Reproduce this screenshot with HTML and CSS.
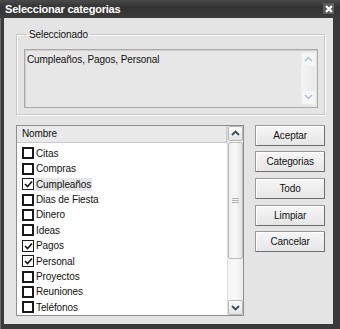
FILE: index.html
```html
<!DOCTYPE html>
<html lang="es">
<head>
    <meta charset="UTF-8">
    <meta name="viewport" content="width=device-width, initial-scale=1.0">
    <title>Seleccionar categorias</title>
    <link rel="stylesheet" href="styles.css">
</head>
<body>
    <div class="window">
        <div class="titlebar">
            <span class="title">Seleccionar categorias</span>
            <span class="close">
                <svg width="8" height="8" viewBox="0 0 8 8">
                    <path d="M1 1 L7 7 M7 1 L1 7" stroke="#fff" stroke-width="2.2"/>
                </svg>
            </span>
        </div>

        <div class="panel">
            <fieldset class="group">
                <legend>Seleccionado</legend>
                <div class="selected-box">
                    <div class="selected-text">Cumpleaños, Pagos, Personal</div>
                    <div class="mini-scroll">
                        <div class="mini-arrow">
                            <svg width="9" height="6" viewBox="0 0 9 6"><path d="M1 5 L4.5 1.5 L8 5" fill="none" stroke="#a8c0e0" stroke-width="1.5"/></svg>
                        </div>
                        <div class="mini-track"></div>
                        <div class="mini-arrow">
                            <svg width="9" height="6" viewBox="0 0 9 6"><path d="M1 1 L4.5 4.5 L8 1" fill="none" stroke="#a8c0e0" stroke-width="1.5"/></svg>
                        </div>
                    </div>
                </div>
            </fieldset>

            <div class="lower">
                <div class="list">
                    <div class="list-body">
                        <div class="list-header">Nombre</div>
                        <div class="rows">
                            <div class="row"><span class="check"></span><span class="name">Citas</span></div>
                            <div class="row"><span class="check"></span><span class="name">Compras</span></div>
                            <div class="row"><span class="check checked"><svg width="9" height="8" viewBox="0 0 9 8"><path d="M1 4 L3.5 6.5 L8 1.5" fill="none" stroke="#111" stroke-width="1.6"/></svg></span><span class="name active">Cumpleaños</span></div>
                            <div class="row"><span class="check"></span><span class="name">Dias de Fiesta</span></div>
                            <div class="row"><span class="check"></span><span class="name">Dinero</span></div>
                            <div class="row"><span class="check"></span><span class="name">Ideas</span></div>
                            <div class="row"><span class="check checked"><svg width="9" height="8" viewBox="0 0 9 8"><path d="M1 4 L3.5 6.5 L8 1.5" fill="none" stroke="#111" stroke-width="1.6"/></svg></span><span class="name">Pagos</span></div>
                            <div class="row"><span class="check checked"><svg width="9" height="8" viewBox="0 0 9 8"><path d="M1 4 L3.5 6.5 L8 1.5" fill="none" stroke="#111" stroke-width="1.6"/></svg></span><span class="name">Personal</span></div>
                            <div class="row"><span class="check"></span><span class="name">Proyectos</span></div>
                            <div class="row"><span class="check"></span><span class="name">Reuniones</span></div>
                            <div class="row"><span class="check"></span><span class="name">Teléfonos</span></div>
                        </div>
                    </div>
                    <div class="scrollbar">
                        <div class="scroll-btn">
                            <svg width="9" height="6" viewBox="0 0 9 6"><path d="M1 5 L4.5 1.5 L8 5" fill="none" stroke="#3c4a5c" stroke-width="1.8"/></svg>
                        </div>
                        <div class="thumb">
                            <div class="grip"></div>
                        </div>
                        <div class="track"></div>
                        <div class="scroll-btn">
                            <svg width="9" height="6" viewBox="0 0 9 6"><path d="M1 1 L4.5 4.5 L8 1" fill="none" stroke="#3c4a5c" stroke-width="1.8"/></svg>
                        </div>
                    </div>
                </div>

                <div class="buttons">
                    <button>Aceptar</button>
                    <button>Categorias</button>
                    <button>Todo</button>
                    <button>Limpiar</button>
                    <button>Cancelar</button>
                </div>
            </div>
        </div>
    </div>
</body>
</html>
```

FILE: styles.css
```css
body {
    margin: 0;
    font-family: "Liberation Sans", Arial, sans-serif;
    font-size: 10px;
    letter-spacing: -0.1px;
    color: #111;
}

.window {
    width: 340px;
    height: 329px;
    box-sizing: border-box;
    background: #3a3a3a;
    padding: 0 7px 5px 3px;
    display: flex;
    flex-direction: column;
    border-left: 1px solid #6a6a6a;
}

.titlebar {
    height: 21px;
    margin: 0 -7px 0 -4px;
    padding: 0 6px 0 5px;
    display: flex;
    align-items: center;
    justify-content: space-between;
    background: linear-gradient(#4a4a4a, #333 40%, #3c3c3c);
}

.title {
    color: #fff;
    font-weight: bold;
    font-size: 11px;
    letter-spacing: -0.2px;
}

.close {
    width: 11px;
    height: 11px;
    background: #5c5c5c;
    display: flex;
    align-items: center;
    justify-content: center;
}

.panel {
    flex: 1;
    background: #e4e4e4;
    padding: 10px 8px 8px 12px;
    display: flex;
    flex-direction: column;
}

.group {
    margin: 0;
    padding: 8px 6px 6px 7px;
    border: 1px solid #c8c8c8;
    box-shadow: inset 1px 1px 0 #fafafa, 1px 1px 0 #fafafa;
}

.group legend {
    padding: 0 2px;
    margin-left: 3px;
    line-height: 13px;
}

.selected-box {
    height: 59px;
    box-sizing: border-box;
    border: 1px solid #a9a9a9;
    background: #e7e7e7;
    display: flex;
    box-shadow: inset 1px 1px 0 #d0d0d0;
}

.selected-text {
    flex: 1;
    padding: 4px 2px;
}

.mini-scroll {
    width: 15px;
    margin: 2px 1px 2px 0;
    display: flex;
    flex-direction: column;
    background: linear-gradient(90deg, #f4f4f4, #eaeaea);
}

.mini-arrow {
    height: 13px;
    display: flex;
    align-items: center;
    justify-content: center;
    background: #f6f6f6;
    border: 1px solid #ececec;
}

.mini-track {
    flex: 1;
}

.lower {
    flex: 1;
    min-height: 0;
    margin-top: 10px;
    display: flex;
    gap: 11px;
}

.list {
    width: 229px;
    box-sizing: border-box;
    border: 1px solid #8e8e8e;
    background: #fff;
    display: flex;
    overflow: hidden;
}

.list-body {
    flex: 1;
    display: flex;
    flex-direction: column;
    overflow: hidden;
}

.list-header {
    height: 17px;
    flex-shrink: 0;
    box-sizing: border-box;
    padding: 2px 5px 1px;
    background: #e9e9e9;
    border-bottom: 1px solid #c9c9c9;
    border-right: 1px solid #c9c9c9;
}

.rows {
    padding-top: 3px;
}

.row {
    height: 15.4px;
    display: flex;
    align-items: center;
    padding-left: 5px;
}

.check {
    width: 12px;
    height: 12px;
    box-sizing: border-box;
    border: 2px solid #1a1a1a;
    background: #fff;
    display: flex;
    align-items: center;
    justify-content: center;
    flex-shrink: 0;
}

.check.checked {
    border-width: 1.5px;
}

.name {
    margin-left: 1px;
    padding: 1px 1px;
}

.name.active {
    background: #e6e6e6;
}

.scrollbar {
    width: 15px;
    display: flex;
    flex-direction: column;
    background: linear-gradient(90deg, #f4f4f4, #f8f8f8 50%, #ececec);
    border-left: 1px solid #dedede;
}

.scroll-btn {
    height: 15px;
    flex-shrink: 0;
    box-sizing: border-box;
    border: 1px solid #b8b8b8;
    border-radius: 2px;
    background: linear-gradient(#fafafa, #e4e4e4);
    display: flex;
    align-items: center;
    justify-content: center;
}

.thumb {
    height: 117px;
    flex-shrink: 0;
    box-sizing: border-box;
    margin-top: 1px;
    border: 1px solid #bcbcbc;
    border-radius: 2px;
    background: linear-gradient(90deg, #eeeeee, #f9f9f9 50%, #e2e2e2);
    display: flex;
    align-items: center;
    justify-content: center;
}

.grip {
    width: 7px;
    height: 5px;
    background: repeating-linear-gradient(#b4b4b4 0 1px, transparent 1px 2px);
}

.track {
    flex: 1;
}

.buttons {
    width: 70px;
    display: flex;
    flex-direction: column;
    gap: 5.7px;
}

button {
    height: 21px;
    font-family: inherit;
    font-size: 10px;
    letter-spacing: -0.1px;
    color: #111;
    background: linear-gradient(#f6f6f6, #e6e6e6);
    border: 1px solid #9a9a9a;
    border-right-color: #6e6e6e;
    border-bottom-color: #6e6e6e;
    border-radius: 1px;
    box-shadow: inset 1px 1px 0 #fff;
    padding: 0;
}
```
